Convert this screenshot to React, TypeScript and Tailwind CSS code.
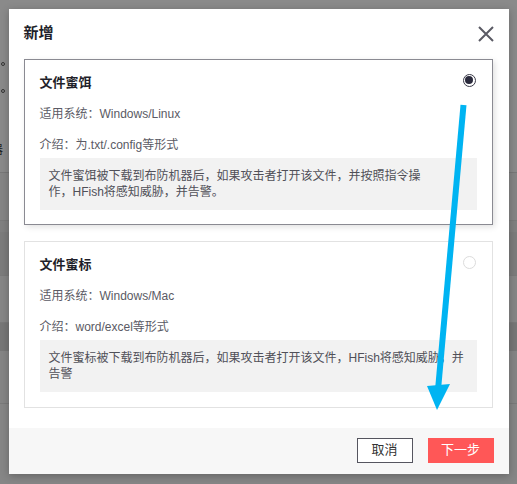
const font = { fontFamily: '"Liberation Sans", "Noto Sans CJK SC", sans-serif' };

function Radio({ checked }: { checked: boolean }) {
  return checked ? (
    <span className="flex h-[13px] w-[13px] items-center justify-center rounded-full border-[1.5px] border-[#3a3a48] bg-white">
      <span className="block h-[8px] w-[8px] rounded-full bg-[#2a2a3c]" />
    </span>
  ) : (
    <span className="block h-[13px] w-[13px] rounded-full border border-[#dcdcdc] bg-white" />
  );
}

function Card({
  title,
  system,
  intro,
  lines,
  checked,
}: {
  title: string;
  system: string;
  intro: string;
  lines: string[];
  checked: boolean;
}) {
  return (
    <div
      className={`px-[15px] pt-[13px] ${
        checked
          ? "border border-[#8a8a92] pb-[14px] shadow-[2px_2px_6px_rgba(0,0,0,0.12)]"
          : "border border-[#e2e2e2] pb-[15px]"
      }`}
    >
      <div className="flex h-[20px] items-center justify-between">
        <span className="text-[13px] font-bold text-[#1f1f2a]">{title}</span>
        <span className="-mt-[5px] mr-[1px] block">
          <Radio checked={checked} />
        </span>
      </div>
      <div className="mt-[11px] h-[20px] text-[12px] leading-[20px] text-[#5a5a64]">
        适用系统：{system}
      </div>
      <div className="mt-[11px] h-[20px] text-[12px] leading-[20px] text-[#5a5a64]">介绍：{intro}</div>
      <div className="mt-[3px] h-[52px] bg-[#f2f2f2] px-[9px] pt-[10px] text-[12px] leading-[16px] text-[#505058]">
        {lines.map((l) => (
          <div key={l} className="whitespace-nowrap">
            {l}
          </div>
        ))}
      </div>
    </div>
  );
}

export default function App() {
  return (
    <div className="relative h-[484px] w-[517px] overflow-hidden bg-[#858585]" style={font}>
      {/* page behind the overlay */}
      <div className="absolute inset-0 flex flex-col">
        <div className="h-[173px] border-b border-[#787878] bg-[#8a8a8a]" />
        <div className="h-[48px] border-b border-[#7a7a7a] bg-[#858585]" />
        <div className="h-[11px] bg-[#808080]" />
        <div className="h-[44px] border-b border-[#7a7a7a] bg-[#7c7c7c]" />
        <div className="h-[47px] border-b border-[#7a7a7a] bg-[#868686]" />
        <div className="h-[28px] bg-[#777777]" />
        <div className="h-[53px] border-b border-[#7a7a7a] bg-[#858585]" />
        <div className="flex-1 bg-[#868686]" />
      </div>
      <div className="absolute left-[1px] top-[62px] h-[4px] w-[4px] rounded-full border border-[#333]" />
      <div className="absolute left-[1px] top-[89px] h-[4px] w-[4px] rounded-full border border-[#333]" />
      <div className="absolute -left-[9px] top-[142px] text-[12px] leading-[16px] text-[#222]">器</div>

      <div className="relative flex h-full w-full items-center justify-center pb-[2px]">
        <div className="flex w-[500px] flex-col bg-white shadow-[0_2px_8px_rgba(0,0,0,0.25)]">
          <div className="flex h-[50px] items-center justify-between pl-[15px] pr-[15px]">
            <span className="text-[15px] font-bold text-[#1f1f2a]">新增</span>
            <svg width="16" height="16" viewBox="0 0 16 16" className="text-[#5a5a64]">
              <path d="M1 1 L15 15 M15 1 L1 15" stroke="currentColor" strokeWidth="2" />
            </svg>
          </div>
          <div className="flex flex-col gap-[16px] pl-[15px] pr-[16px] pb-[20px]">
            <Card
              checked
              title="文件蜜饵"
              system="Windows/Linux"
              intro="为.txt/.config等形式"
              lines={[
                "文件蜜饵被下载到布防机器后，如果攻击者打开该文件，并按照指令操",
                "作，HFish将感知威胁，并告警。",
              ]}
            />
            <Card
              checked={false}
              title="文件蜜标"
              system="Windows/Mac"
              intro="word/excel等形式"
              lines={["文件蜜标被下载到布防机器后，如果攻击者打开该文件，HFish将感知威胁，并", "告警"]}
            />
          </div>
          <div className="flex h-[46px] items-center justify-end gap-[15px] bg-[#f7f7f7] pr-[15px] pb-[1px]">
            <button className="flex h-[25px] w-[56px] items-center justify-center border border-[#55555f] bg-white text-[13px] text-[#333]">
              取消
            </button>
            <button className="flex h-[25px] w-[66px] items-center justify-center bg-[#ff5757] text-[13px] text-white">
              下一步
            </button>
          </div>
        </div>
      </div>

      {/* annotation arrow */}
      <svg className="pointer-events-none absolute inset-0" width="517" height="484" viewBox="0 0 517 484">
        <line x1="463.5" y1="105" x2="438" y2="390" stroke="#00b4f2" strokeWidth="6" />
        <polygon points="427,386 450,384 437,410" fill="#00b4f2" />
      </svg>
    </div>
  );
}
